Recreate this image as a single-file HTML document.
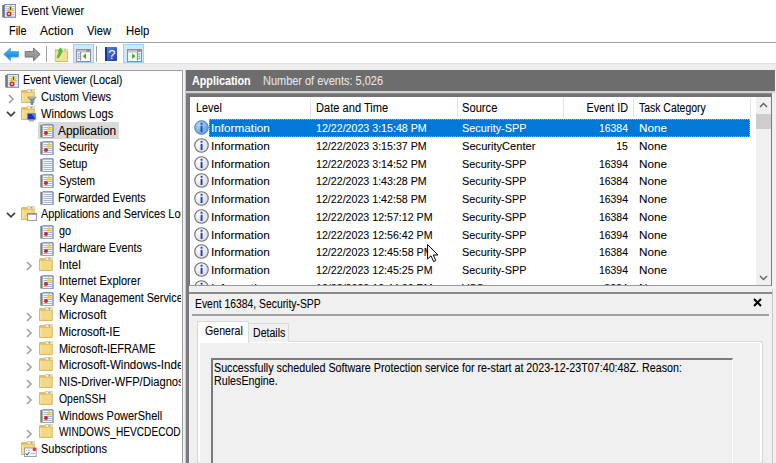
<!DOCTYPE html>
<html><head><meta charset="utf-8"><style>
html,body{margin:0;padding:0;}
body{width:776px;height:463px;overflow:hidden;position:relative;background:#fff;font-family:"Liberation Sans", sans-serif;}
.r{position:absolute;}
.t{position:absolute;white-space:nowrap;line-height:1;font-family:"Liberation Sans", sans-serif;-webkit-text-stroke:0.08px currentColor;}
svg{display:block;}
</style></head><body>
<div class="r" style="left:0px;top:0px;width:776px;height:22px;background:#fff;"></div><svg class="r" style="left:1.5px;top:3.6px" width="14" height="14" viewBox="0 0 14 14"><rect x="0.3" y="1" width="2.6" height="12.6" fill="#8c8c8c"/>
<path d="M0.3 2h2.6M0.3 4h2.6M0.3 6h2.6M0.3 8h2.6M0.3 10h2.6M0.3 12h2.6" stroke="#4a4a4a" stroke-width="0.8"/>
<rect x="2.4" y="0.5" width="11" height="13.2" fill="#eef3fa" stroke="#6f82b4" stroke-width="0.9"/>
<path d="M3.2 2.5h9.6M3.2 4.5h9.6M3.2 6.5h9.6M3.2 8.5h9.6M3.2 10.5h9.6M3.2 12.5h9.6" stroke="#b3c9ea" stroke-width="0.9"/>
<path d="M8.4 1.4 L11.4 7 L5.4 7 Z" fill="#f3d31a" stroke="#c9a600" stroke-width="0.5"/>
<rect x="8" y="2.9" width="0.9" height="3" fill="#3a3a1a"/>
<circle cx="7" cy="9.9" r="2.5" fill="#d42d2d"/>
<path d="M6.1 9l1.8 1.8M7.9 9l-1.8 1.8" stroke="#fff" stroke-width="0.8"/></svg><div class="t" style="left:21.00px;top:4.84px;font-size:12px;color:#000;transform:scaleX(0.8936);transform-origin:0 0;">Event Viewer</div><div class="t" style="left:8.50px;top:25.34px;font-size:12px;color:#000;transform:scaleX(0.9067);transform-origin:0 0;">File</div><div class="t" style="left:40.00px;top:25.34px;font-size:12px;color:#000;transform:scaleX(1.0000);transform-origin:0 0;">Action</div><div class="t" style="left:87.40px;top:25.34px;font-size:12px;color:#000;transform:scaleX(0.9341);transform-origin:0 0;">View</div><div class="t" style="left:126.00px;top:25.34px;font-size:12px;color:#000;transform:scaleX(0.9433);transform-origin:0 0;">Help</div><div class="r" style="left:0px;top:42px;width:776px;height:1px;background:#a0a0a0;"></div><div class="r" style="left:0px;top:43px;width:776px;height:20px;background:#fff;"></div><div class="r" style="left:0px;top:63px;width:776px;height:7px;background:#ededed;"></div><div class="r" style="left:0px;top:63px;width:776px;height:1px;background:#e3e3e3;"></div><svg class="r" style="left:3px;top:47px" width="17" height="15" viewBox="0 0 17 15">
<defs><linearGradient id="gb" x1="0" y1="0" x2="0" y2="1"><stop offset="0" stop-color="#5cb8f6"/><stop offset="0.6" stop-color="#1f8fe6"/><stop offset="1" stop-color="#3aa0ee"/></linearGradient></defs>
<path d="M0.8 7.3 L7.5 1 L7.5 4.5 L15.6 4.5 L15.6 10.1 L7.5 10.1 L7.5 13.8 Z" fill="url(#gb)" stroke="#4aa6ee" stroke-width="0.8" stroke-linejoin="round"/>
</svg><svg class="r" style="left:24px;top:47px" width="17" height="15" viewBox="0 0 17 15">
<defs><linearGradient id="gg" x1="0" y1="0" x2="0" y2="1"><stop offset="0" stop-color="#a8a8a8"/><stop offset="1" stop-color="#8a8a8a"/></linearGradient></defs>
<path d="M16.2 7.3 L9.5 1 L9.5 4.5 L1.2 4.5 L1.2 10.1 L9.5 10.1 L9.5 13.8 Z" fill="url(#gg)" stroke="#6e6e6e" stroke-width="0.9" stroke-linejoin="round"/>
</svg><div class="r" style="left:46px;top:46px;width:1px;height:16px;background:#a0a0a0;"></div><svg class="r" style="left:54px;top:46px" width="16" height="16" viewBox="0 0 16 16">
<rect x="1.2" y="3.8" width="12.5" height="11.8" fill="#f2d480" stroke="#d0a850" stroke-width="0.7"/>
<rect x="7.6" y="2.9" width="6.1" height="2.4" fill="#fbefd0" stroke="#d8b865" stroke-width="0.5"/>
<rect x="10.3" y="3.4" width="1.6" height="1" fill="#4c9be0"/>
<rect x="1.8" y="6.4" width="11.3" height="8.6" fill="#f8df98"/>
<path d="M6.4 1.3 L9.4 5.6 L3.6 5.6 Z" fill="#3cc83c"/>
<path d="M3 11.8 C3.4 9.2 4.8 7.2 5.2 5.4 L7.7 5.4 C7.4 7.8 5.9 9.9 4.4 12 Z" fill="#3cc83c" stroke="#2aa02a" stroke-width="0.4"/>
</svg><div class="r" style="left:73px;top:44px;width:21px;height:19px;background:#cce8ff;box-sizing:border-box;border:1px solid #99d1ff;"></div><svg class="r" style="left:76px;top:49px" width="15" height="13" viewBox="0 0 15 13">
<rect x="0.5" y="0.5" width="14" height="12" fill="#f6f6f6" stroke="#8f8f8f"/>
<rect x="1" y="1" width="13" height="2.4" fill="#c2c2c2"/>
<rect x="10.5" y="1.3" width="1.2" height="1.2" fill="#555"/><rect x="12.2" y="1.3" width="1.2" height="1.2" fill="#555"/>
<rect x="1" y="3" width="3.2" height="8.5" fill="#f2f2f2"/><path d="M1.8 5h1.8M1.8 7.2h1.8M1.8 9.4h1.8" stroke="#3a78d0" stroke-width="0.9"/><rect x="4.2" y="3" width="0.9" height="8.5" fill="#7a7a7a"/><path d="M10 4.3 L6.8 7.2 L10 10.1Z" fill="#28b028"/>
</svg><div class="r" style="left:96px;top:46px;width:1px;height:16px;background:#a0a0a0;"></div><svg class="r" style="left:105px;top:47px" width="12" height="14" viewBox="0 0 12 14">
<defs><linearGradient id="gh" x1="0" y1="0" x2="1" y2="1"><stop offset="0" stop-color="#5b86e0"/><stop offset="1" stop-color="#1f3fa8"/></linearGradient></defs>
<rect x="0" y="0" width="12" height="14" rx="1" fill="url(#gh)"/>
<rect x="0" y="0" width="2" height="14" fill="#1a3590"/>
<text x="6.9" y="12" font-family="Liberation Sans" font-size="13" fill="#fff" text-anchor="middle">?</text>
</svg><div class="r" style="left:123px;top:44px;width:21px;height:19px;background:#cce8ff;box-sizing:border-box;border:1px solid #99d1ff;"></div><svg class="r" style="left:127px;top:49px" width="15" height="13" viewBox="0 0 15 13">
<rect x="0.5" y="0.5" width="14" height="12" fill="#f6f6f6" stroke="#8f8f8f"/>
<rect x="1" y="1" width="13" height="2.4" fill="#c2c2c2"/>
<rect x="10.5" y="1.3" width="1.2" height="1.2" fill="#555"/><rect x="12.2" y="1.3" width="1.2" height="1.2" fill="#555"/>
<rect x="10.8" y="3" width="3.2" height="8.5" fill="#f2f2f2"/><path d="M11.4 5h1.8M11.4 7.2h1.8M11.4 9.4h1.8" stroke="#3a78d0" stroke-width="0.9"/><rect x="9.9" y="3" width="0.9" height="8.5" fill="#7a7a7a"/><path d="M5.2 4.3 L8.4 7.2 L5.2 10.1Z" fill="#28b028"/>
</svg><div class="r" style="left:0px;top:70px;width:183px;height:393px;background:#fff;box-sizing:border-box;border-top:1px solid #9ca1aa;border-right:1px solid #9ca1aa;"></div><div class="r" style="left:183px;top:70px;width:3px;height:393px;background:#f0f0f0;"></div><div class="r" style="left:37.6px;top:122.2px;width:81px;height:16.4px;background:#d9d9d9;"></div><div class="r" style="left:0;top:71px;width:181px;height:392px;overflow:hidden"><div class="t" style="left:23.2px;top:3.24px;font-size:12px;transform:scaleX(0.9);transform-origin:0 0">Event Viewer (Local)</div><div class="t" style="left:40.6px;top:20.01px;font-size:12px;transform:scaleX(0.915);transform-origin:0 0">Custom Views</div><div class="t" style="left:40.8px;top:36.78px;font-size:12px;transform:scaleX(0.925);transform-origin:0 0">Windows Logs</div><div class="t" style="left:58.2px;top:53.55px;font-size:12px;transform:scaleX(0.99);transform-origin:0 0">Application</div><div class="t" style="left:58.7px;top:70.32px;font-size:12px;transform:scaleX(0.91);transform-origin:0 0">Security</div><div class="t" style="left:58.7px;top:87.09px;font-size:12px;transform:scaleX(0.9);transform-origin:0 0">Setup</div><div class="t" style="left:58.7px;top:103.86px;font-size:12px;transform:scaleX(0.9);transform-origin:0 0">System</div><div class="t" style="left:58.4px;top:120.63px;font-size:12px;transform:scaleX(0.9);transform-origin:0 0">Forwarded Events</div><div class="t" style="left:40.8px;top:137.40px;font-size:12px;transform:scaleX(0.905);transform-origin:0 0">Applications and Services Logs</div><div class="t" style="left:58.7px;top:154.17px;font-size:12px;transform:scaleX(0.9);transform-origin:0 0">go</div><div class="t" style="left:58.7px;top:170.94px;font-size:12px;transform:scaleX(0.9);transform-origin:0 0">Hardware Events</div><div class="t" style="left:58.7px;top:187.71px;font-size:12px;transform:scaleX(0.96);transform-origin:0 0">Intel</div><div class="t" style="left:58.7px;top:204.48px;font-size:12px;transform:scaleX(0.92);transform-origin:0 0">Internet Explorer</div><div class="t" style="left:58.7px;top:221.25px;font-size:12px;transform:scaleX(0.9);transform-origin:0 0">Key Management Service</div><div class="t" style="left:58.7px;top:238.02px;font-size:12px;transform:scaleX(0.975);transform-origin:0 0">Microsoft</div><div class="t" style="left:58.7px;top:254.79px;font-size:12px;transform:scaleX(0.955);transform-origin:0 0">Microsoft-IE</div><div class="t" style="left:58.7px;top:271.56px;font-size:12px;transform:scaleX(0.91);transform-origin:0 0">Microsoft-IEFRAME</div><div class="t" style="left:58.7px;top:288.33px;font-size:12px;transform:scaleX(0.966);transform-origin:0 0">Microsoft-Windows-Indexing</div><div class="t" style="left:58.7px;top:305.10px;font-size:12px;transform:scaleX(0.93);transform-origin:0 0">NIS-Driver-WFP/Diagnostic</div><div class="t" style="left:58.7px;top:321.87px;font-size:12px;transform:scaleX(0.868);transform-origin:0 0">OpenSSH</div><div class="t" style="left:58.7px;top:338.64px;font-size:12px;transform:scaleX(0.915);transform-origin:0 0">Windows PowerShell</div><div class="t" style="left:58.7px;top:355.41px;font-size:12px;transform:scaleX(0.845);transform-origin:0 0">WINDOWS_HEVCDECODER</div><div class="t" style="left:40.6px;top:372.18px;font-size:12px;transform:scaleX(0.915);transform-origin:0 0">Subscriptions</div></div><svg class="r" style="left:4.5px;top:74.0px" width="14" height="14" viewBox="0 0 14 14"><rect x="0.3" y="1" width="2.6" height="12.6" fill="#8c8c8c"/>
<path d="M0.3 2h2.6M0.3 4h2.6M0.3 6h2.6M0.3 8h2.6M0.3 10h2.6M0.3 12h2.6" stroke="#4a4a4a" stroke-width="0.8"/>
<rect x="2.4" y="0.5" width="11" height="13.2" fill="#eef3fa" stroke="#6f82b4" stroke-width="0.9"/>
<path d="M3.2 2.5h9.6M3.2 4.5h9.6M3.2 6.5h9.6M3.2 8.5h9.6M3.2 10.5h9.6M3.2 12.5h9.6" stroke="#b3c9ea" stroke-width="0.9"/>
<path d="M8.4 1.4 L11.4 7 L5.4 7 Z" fill="#f3d31a" stroke="#c9a600" stroke-width="0.5"/>
<rect x="8" y="2.9" width="0.9" height="3" fill="#3a3a1a"/>
<circle cx="7" cy="9.9" r="2.5" fill="#d42d2d"/>
<path d="M6.1 9l1.8 1.8M7.9 9l-1.8 1.8" stroke="#fff" stroke-width="0.8"/></svg><svg class="r" style="left:21px;top:88.97px" width="16" height="16" viewBox="0 0 16 16"><path d="M0.6 1.6h5.2l1 1.2h6.2v10.6H0.6z" fill="#e8c468" stroke="#d2aa50" stroke-width="0.7"/>
<rect x="6.6" y="0.4" width="6.6" height="3.2" fill="#fbf1d2" stroke="#d8b865" stroke-width="0.6"/>
<rect x="9.4" y="1.2" width="2" height="1.2" fill="#4c9be0"/>
<path d="M0.6 3.2h12.6v10.2H0.6z" fill="#f5d883" stroke="#d6b158" stroke-width="0.7"/>
<rect x="1.3" y="3.9" width="1" height="9" fill="#fbe7a8"/>
<path d="M6.8 8.2h8.4l-3.2 3.6v3.6h-2v-3.6z" fill="#7d9ab8" stroke="#4a6482" stroke-width="0.6"/><path d="M8 8.8h6" stroke="#c8dcef" stroke-width="0.8"/></svg><svg class="r" style="left:6.8px;top:93.57000000000001px" width="8" height="10" viewBox="0 0 8 10"><path d="M2 1 L6 5 L2 9" fill="none" stroke="#a0a0a0" stroke-width="1.6"/></svg><svg class="r" style="left:21px;top:105.74px" width="16" height="16" viewBox="0 0 16 16"><path d="M0.6 1.6h5.2l1 1.2h6.2v10.6H0.6z" fill="#e8c468" stroke="#d2aa50" stroke-width="0.7"/>
<rect x="6.6" y="0.4" width="6.6" height="3.2" fill="#fbf1d2" stroke="#d8b865" stroke-width="0.6"/>
<rect x="9.4" y="1.2" width="2" height="1.2" fill="#4c9be0"/>
<path d="M0.6 3.2h12.6v10.2H0.6z" fill="#f5d883" stroke="#d6b158" stroke-width="0.7"/>
<rect x="1.3" y="3.9" width="1" height="9" fill="#fbe7a8"/>
<rect x="6.2" y="7.2" width="8.6" height="6.6" fill="#1b2fc0" stroke="#b0b0b0" stroke-width="0.8"/><path d="M10.5 7.8h3.8v5.4z" fill="#6a8cf0" opacity="0.8"/><rect x="8" y="14.2" width="5" height="1.2" fill="#9a9a9a"/></svg><svg class="r" style="left:5.8px;top:110.34px" width="10" height="8" viewBox="0 0 10 8"><path d="M1 1.8 L5 5.8 L9 1.8" fill="none" stroke="#404040" stroke-width="1.7"/></svg><svg class="r" style="left:39.6px;top:124.11000000000001px" width="14" height="14" viewBox="0 0 14 14">
<rect x="0.4" y="0.8" width="2.6" height="13" fill="#9a9a9a"/>
<path d="M0.4 2h2.6M0.4 4h2.6M0.4 6h2.6M0.4 8h2.6M0.4 10h2.6M0.4 12h2.6" stroke="#505050" stroke-width="0.8"/>
<rect x="2.6" y="0.6" width="10.6" height="13.1" fill="#f6f9fd"/>
<path d="M2.6 0.9h10.4v12.8" fill="none" stroke="#4a5fa8" stroke-width="1"/>
<path d="M2.6 13.5h10.6" stroke="#8a8a9a" stroke-width="0.8"/>
<path d="M3.4 3.5h9M3.4 5.5h9M3.4 7.5h9M3.4 9.5h9M3.4 11.5h9" stroke="#9dbbe6" stroke-width="1"/>
<path d="M9.15 1.5 L11.5 6.2 L6.8 6.2 Z" fill="#f2d423" stroke="#e6c21a" stroke-width="0.4"/><circle cx="6" cy="8.9" r="2" fill="#cc2a2a"/>
</svg><svg class="r" style="left:39.6px;top:140.88000000000002px" width="14" height="14" viewBox="0 0 14 14">
<rect x="0.4" y="0.8" width="2.6" height="13" fill="#9a9a9a"/>
<path d="M0.4 2h2.6M0.4 4h2.6M0.4 6h2.6M0.4 8h2.6M0.4 10h2.6M0.4 12h2.6" stroke="#505050" stroke-width="0.8"/>
<rect x="2.6" y="0.6" width="10.6" height="13.1" fill="#f6f9fd"/>
<path d="M2.6 0.9h10.4v12.8" fill="none" stroke="#4a5fa8" stroke-width="1"/>
<path d="M2.6 13.5h10.6" stroke="#8a8a9a" stroke-width="0.8"/>
<path d="M3.4 3.5h9M3.4 5.5h9M3.4 7.5h9M3.4 9.5h9M3.4 11.5h9" stroke="#9dbbe6" stroke-width="1"/>
<path d="M9.15 1.5 L11.5 6.2 L6.8 6.2 Z" fill="#f2d423" stroke="#e6c21a" stroke-width="0.4"/><circle cx="6" cy="8.9" r="2" fill="#cc2a2a"/>
</svg><svg class="r" style="left:39.6px;top:157.65px" width="14" height="14" viewBox="0 0 14 14">
<rect x="0.4" y="0.8" width="2.6" height="13" fill="#9a9a9a"/>
<path d="M0.4 2h2.6M0.4 4h2.6M0.4 6h2.6M0.4 8h2.6M0.4 10h2.6M0.4 12h2.6" stroke="#505050" stroke-width="0.8"/>
<rect x="2.6" y="0.6" width="10.6" height="13.1" fill="#f6f9fd"/>
<path d="M2.6 0.9h10.4v12.8" fill="none" stroke="#4a5fa8" stroke-width="1"/>
<path d="M2.6 13.5h10.6" stroke="#8a8a9a" stroke-width="0.8"/>
<path d="M3.4 3.5h9M3.4 5.5h9M3.4 7.5h9M3.4 9.5h9M3.4 11.5h9" stroke="#9dbbe6" stroke-width="1"/>

</svg><svg class="r" style="left:39.6px;top:174.42000000000002px" width="14" height="14" viewBox="0 0 14 14">
<rect x="0.4" y="0.8" width="2.6" height="13" fill="#9a9a9a"/>
<path d="M0.4 2h2.6M0.4 4h2.6M0.4 6h2.6M0.4 8h2.6M0.4 10h2.6M0.4 12h2.6" stroke="#505050" stroke-width="0.8"/>
<rect x="2.6" y="0.6" width="10.6" height="13.1" fill="#f6f9fd"/>
<path d="M2.6 0.9h10.4v12.8" fill="none" stroke="#4a5fa8" stroke-width="1"/>
<path d="M2.6 13.5h10.6" stroke="#8a8a9a" stroke-width="0.8"/>
<path d="M3.4 3.5h9M3.4 5.5h9M3.4 7.5h9M3.4 9.5h9M3.4 11.5h9" stroke="#9dbbe6" stroke-width="1"/>
<path d="M9.15 1.5 L11.5 6.2 L6.8 6.2 Z" fill="#f2d423" stroke="#e6c21a" stroke-width="0.4"/><circle cx="6" cy="8.9" r="2" fill="#cc2a2a"/>
</svg><svg class="r" style="left:39.6px;top:191.19000000000003px" width="14" height="14" viewBox="0 0 14 14">
<rect x="0.4" y="0.8" width="2.6" height="13" fill="#9a9a9a"/>
<path d="M0.4 2h2.6M0.4 4h2.6M0.4 6h2.6M0.4 8h2.6M0.4 10h2.6M0.4 12h2.6" stroke="#505050" stroke-width="0.8"/>
<rect x="2.6" y="0.6" width="10.6" height="13.1" fill="#f6f9fd"/>
<path d="M2.6 0.9h10.4v12.8" fill="none" stroke="#4a5fa8" stroke-width="1"/>
<path d="M2.6 13.5h10.6" stroke="#8a8a9a" stroke-width="0.8"/>
<path d="M3.4 3.5h9M3.4 5.5h9M3.4 7.5h9M3.4 9.5h9M3.4 11.5h9" stroke="#9dbbe6" stroke-width="1"/>

</svg><svg class="r" style="left:21px;top:206.36px" width="16" height="16" viewBox="0 0 16 16"><path d="M0.6 1.6h5.2l1 1.2h6.2v10.6H0.6z" fill="#e8c468" stroke="#d2aa50" stroke-width="0.7"/>
<rect x="6.6" y="0.4" width="6.6" height="3.2" fill="#fbf1d2" stroke="#d8b865" stroke-width="0.6"/>
<rect x="9.4" y="1.2" width="2" height="1.2" fill="#4c9be0"/>
<path d="M0.6 3.2h12.6v10.2H0.6z" fill="#f5d883" stroke="#d6b158" stroke-width="0.7"/>
<rect x="1.3" y="3.9" width="1" height="9" fill="#fbe7a8"/>
<rect x="6.4" y="7.6" width="9" height="6.8" fill="#fbfbfb" stroke="#868c9a" stroke-width="0.9"/><rect x="6.4" y="7.4" width="9" height="1.3" fill="#868c9a"/></svg><svg class="r" style="left:5.8px;top:210.96px" width="10" height="8" viewBox="0 0 10 8"><path d="M1 1.8 L5 5.8 L9 1.8" fill="none" stroke="#404040" stroke-width="1.7"/></svg><svg class="r" style="left:39.6px;top:224.73000000000002px" width="14" height="14" viewBox="0 0 14 14">
<rect x="0.4" y="0.8" width="2.6" height="13" fill="#9a9a9a"/>
<path d="M0.4 2h2.6M0.4 4h2.6M0.4 6h2.6M0.4 8h2.6M0.4 10h2.6M0.4 12h2.6" stroke="#505050" stroke-width="0.8"/>
<rect x="2.6" y="0.6" width="10.6" height="13.1" fill="#f6f9fd"/>
<path d="M2.6 0.9h10.4v12.8" fill="none" stroke="#4a5fa8" stroke-width="1"/>
<path d="M2.6 13.5h10.6" stroke="#8a8a9a" stroke-width="0.8"/>
<path d="M3.4 3.5h9M3.4 5.5h9M3.4 7.5h9M3.4 9.5h9M3.4 11.5h9" stroke="#9dbbe6" stroke-width="1"/>
<path d="M9.15 1.5 L11.5 6.2 L6.8 6.2 Z" fill="#f2d423" stroke="#e6c21a" stroke-width="0.4"/><circle cx="6" cy="8.9" r="2" fill="#cc2a2a"/>
</svg><svg class="r" style="left:39.6px;top:241.5px" width="14" height="14" viewBox="0 0 14 14">
<rect x="0.4" y="0.8" width="2.6" height="13" fill="#9a9a9a"/>
<path d="M0.4 2h2.6M0.4 4h2.6M0.4 6h2.6M0.4 8h2.6M0.4 10h2.6M0.4 12h2.6" stroke="#505050" stroke-width="0.8"/>
<rect x="2.6" y="0.6" width="10.6" height="13.1" fill="#f6f9fd"/>
<path d="M2.6 0.9h10.4v12.8" fill="none" stroke="#4a5fa8" stroke-width="1"/>
<path d="M2.6 13.5h10.6" stroke="#8a8a9a" stroke-width="0.8"/>
<path d="M3.4 3.5h9M3.4 5.5h9M3.4 7.5h9M3.4 9.5h9M3.4 11.5h9" stroke="#9dbbe6" stroke-width="1"/>
<path d="M9.15 1.5 L11.5 6.2 L6.8 6.2 Z" fill="#f2d423" stroke="#e6c21a" stroke-width="0.4"/><circle cx="6" cy="8.9" r="2" fill="#cc2a2a"/>
</svg><svg class="r" style="left:38.8px;top:256.67px" width="16" height="16" viewBox="0 0 16 16"><path d="M0.6 1.6h5.2l1 1.2h6.2v10.6H0.6z" fill="#e8c468" stroke="#d2aa50" stroke-width="0.7"/>
<rect x="6.6" y="0.4" width="6.6" height="3.2" fill="#fbf1d2" stroke="#d8b865" stroke-width="0.6"/>
<rect x="9.4" y="1.2" width="2" height="1.2" fill="#4c9be0"/>
<path d="M0.6 3.2h12.6v10.2H0.6z" fill="#f5d883" stroke="#d6b158" stroke-width="0.7"/>
<rect x="1.3" y="3.9" width="1" height="9" fill="#fbe7a8"/>
</svg><svg class="r" style="left:24.8px;top:261.27px" width="8" height="10" viewBox="0 0 8 10"><path d="M2 1 L6 5 L2 9" fill="none" stroke="#a0a0a0" stroke-width="1.6"/></svg><svg class="r" style="left:39.6px;top:275.03999999999996px" width="14" height="14" viewBox="0 0 14 14">
<rect x="0.4" y="0.8" width="2.6" height="13" fill="#9a9a9a"/>
<path d="M0.4 2h2.6M0.4 4h2.6M0.4 6h2.6M0.4 8h2.6M0.4 10h2.6M0.4 12h2.6" stroke="#505050" stroke-width="0.8"/>
<rect x="2.6" y="0.6" width="10.6" height="13.1" fill="#f6f9fd"/>
<path d="M2.6 0.9h10.4v12.8" fill="none" stroke="#4a5fa8" stroke-width="1"/>
<path d="M2.6 13.5h10.6" stroke="#8a8a9a" stroke-width="0.8"/>
<path d="M3.4 3.5h9M3.4 5.5h9M3.4 7.5h9M3.4 9.5h9M3.4 11.5h9" stroke="#9dbbe6" stroke-width="1"/>
<path d="M9.15 1.5 L11.5 6.2 L6.8 6.2 Z" fill="#f2d423" stroke="#e6c21a" stroke-width="0.4"/><circle cx="6" cy="8.9" r="2" fill="#cc2a2a"/>
</svg><svg class="r" style="left:39.6px;top:291.80999999999995px" width="14" height="14" viewBox="0 0 14 14">
<rect x="0.4" y="0.8" width="2.6" height="13" fill="#9a9a9a"/>
<path d="M0.4 2h2.6M0.4 4h2.6M0.4 6h2.6M0.4 8h2.6M0.4 10h2.6M0.4 12h2.6" stroke="#505050" stroke-width="0.8"/>
<rect x="2.6" y="0.6" width="10.6" height="13.1" fill="#f6f9fd"/>
<path d="M2.6 0.9h10.4v12.8" fill="none" stroke="#4a5fa8" stroke-width="1"/>
<path d="M2.6 13.5h10.6" stroke="#8a8a9a" stroke-width="0.8"/>
<path d="M3.4 3.5h9M3.4 5.5h9M3.4 7.5h9M3.4 9.5h9M3.4 11.5h9" stroke="#9dbbe6" stroke-width="1"/>
<path d="M9.15 1.5 L11.5 6.2 L6.8 6.2 Z" fill="#f2d423" stroke="#e6c21a" stroke-width="0.4"/><circle cx="6" cy="8.9" r="2" fill="#cc2a2a"/>
</svg><svg class="r" style="left:38.8px;top:306.98px" width="16" height="16" viewBox="0 0 16 16"><path d="M0.6 1.6h5.2l1 1.2h6.2v10.6H0.6z" fill="#e8c468" stroke="#d2aa50" stroke-width="0.7"/>
<rect x="6.6" y="0.4" width="6.6" height="3.2" fill="#fbf1d2" stroke="#d8b865" stroke-width="0.6"/>
<rect x="9.4" y="1.2" width="2" height="1.2" fill="#4c9be0"/>
<path d="M0.6 3.2h12.6v10.2H0.6z" fill="#f5d883" stroke="#d6b158" stroke-width="0.7"/>
<rect x="1.3" y="3.9" width="1" height="9" fill="#fbe7a8"/>
</svg><svg class="r" style="left:24.8px;top:311.58px" width="8" height="10" viewBox="0 0 8 10"><path d="M2 1 L6 5 L2 9" fill="none" stroke="#a0a0a0" stroke-width="1.6"/></svg><svg class="r" style="left:38.8px;top:323.75px" width="16" height="16" viewBox="0 0 16 16"><path d="M0.6 1.6h5.2l1 1.2h6.2v10.6H0.6z" fill="#e8c468" stroke="#d2aa50" stroke-width="0.7"/>
<rect x="6.6" y="0.4" width="6.6" height="3.2" fill="#fbf1d2" stroke="#d8b865" stroke-width="0.6"/>
<rect x="9.4" y="1.2" width="2" height="1.2" fill="#4c9be0"/>
<path d="M0.6 3.2h12.6v10.2H0.6z" fill="#f5d883" stroke="#d6b158" stroke-width="0.7"/>
<rect x="1.3" y="3.9" width="1" height="9" fill="#fbe7a8"/>
</svg><svg class="r" style="left:24.8px;top:328.34999999999997px" width="8" height="10" viewBox="0 0 8 10"><path d="M2 1 L6 5 L2 9" fill="none" stroke="#a0a0a0" stroke-width="1.6"/></svg><svg class="r" style="left:38.8px;top:340.52000000000004px" width="16" height="16" viewBox="0 0 16 16"><path d="M0.6 1.6h5.2l1 1.2h6.2v10.6H0.6z" fill="#e8c468" stroke="#d2aa50" stroke-width="0.7"/>
<rect x="6.6" y="0.4" width="6.6" height="3.2" fill="#fbf1d2" stroke="#d8b865" stroke-width="0.6"/>
<rect x="9.4" y="1.2" width="2" height="1.2" fill="#4c9be0"/>
<path d="M0.6 3.2h12.6v10.2H0.6z" fill="#f5d883" stroke="#d6b158" stroke-width="0.7"/>
<rect x="1.3" y="3.9" width="1" height="9" fill="#fbe7a8"/>
</svg><svg class="r" style="left:24.8px;top:345.12px" width="8" height="10" viewBox="0 0 8 10"><path d="M2 1 L6 5 L2 9" fill="none" stroke="#a0a0a0" stroke-width="1.6"/></svg><svg class="r" style="left:38.8px;top:357.29px" width="16" height="16" viewBox="0 0 16 16"><path d="M0.6 1.6h5.2l1 1.2h6.2v10.6H0.6z" fill="#e8c468" stroke="#d2aa50" stroke-width="0.7"/>
<rect x="6.6" y="0.4" width="6.6" height="3.2" fill="#fbf1d2" stroke="#d8b865" stroke-width="0.6"/>
<rect x="9.4" y="1.2" width="2" height="1.2" fill="#4c9be0"/>
<path d="M0.6 3.2h12.6v10.2H0.6z" fill="#f5d883" stroke="#d6b158" stroke-width="0.7"/>
<rect x="1.3" y="3.9" width="1" height="9" fill="#fbe7a8"/>
</svg><svg class="r" style="left:24.8px;top:361.89px" width="8" height="10" viewBox="0 0 8 10"><path d="M2 1 L6 5 L2 9" fill="none" stroke="#a0a0a0" stroke-width="1.6"/></svg><svg class="r" style="left:38.8px;top:374.06px" width="16" height="16" viewBox="0 0 16 16"><path d="M0.6 1.6h5.2l1 1.2h6.2v10.6H0.6z" fill="#e8c468" stroke="#d2aa50" stroke-width="0.7"/>
<rect x="6.6" y="0.4" width="6.6" height="3.2" fill="#fbf1d2" stroke="#d8b865" stroke-width="0.6"/>
<rect x="9.4" y="1.2" width="2" height="1.2" fill="#4c9be0"/>
<path d="M0.6 3.2h12.6v10.2H0.6z" fill="#f5d883" stroke="#d6b158" stroke-width="0.7"/>
<rect x="1.3" y="3.9" width="1" height="9" fill="#fbe7a8"/>
</svg><svg class="r" style="left:24.8px;top:378.65999999999997px" width="8" height="10" viewBox="0 0 8 10"><path d="M2 1 L6 5 L2 9" fill="none" stroke="#a0a0a0" stroke-width="1.6"/></svg><svg class="r" style="left:38.8px;top:390.83px" width="16" height="16" viewBox="0 0 16 16"><path d="M0.6 1.6h5.2l1 1.2h6.2v10.6H0.6z" fill="#e8c468" stroke="#d2aa50" stroke-width="0.7"/>
<rect x="6.6" y="0.4" width="6.6" height="3.2" fill="#fbf1d2" stroke="#d8b865" stroke-width="0.6"/>
<rect x="9.4" y="1.2" width="2" height="1.2" fill="#4c9be0"/>
<path d="M0.6 3.2h12.6v10.2H0.6z" fill="#f5d883" stroke="#d6b158" stroke-width="0.7"/>
<rect x="1.3" y="3.9" width="1" height="9" fill="#fbe7a8"/>
</svg><svg class="r" style="left:24.8px;top:395.42999999999995px" width="8" height="10" viewBox="0 0 8 10"><path d="M2 1 L6 5 L2 9" fill="none" stroke="#a0a0a0" stroke-width="1.6"/></svg><svg class="r" style="left:39.6px;top:409.19999999999993px" width="14" height="14" viewBox="0 0 14 14">
<rect x="0.4" y="0.8" width="2.6" height="13" fill="#9a9a9a"/>
<path d="M0.4 2h2.6M0.4 4h2.6M0.4 6h2.6M0.4 8h2.6M0.4 10h2.6M0.4 12h2.6" stroke="#505050" stroke-width="0.8"/>
<rect x="2.6" y="0.6" width="10.6" height="13.1" fill="#f6f9fd"/>
<path d="M2.6 0.9h10.4v12.8" fill="none" stroke="#4a5fa8" stroke-width="1"/>
<path d="M2.6 13.5h10.6" stroke="#8a8a9a" stroke-width="0.8"/>
<path d="M3.4 3.5h9M3.4 5.5h9M3.4 7.5h9M3.4 9.5h9M3.4 11.5h9" stroke="#9dbbe6" stroke-width="1"/>
<path d="M9.15 1.5 L11.5 6.2 L6.8 6.2 Z" fill="#f2d423" stroke="#e6c21a" stroke-width="0.4"/><circle cx="6" cy="8.9" r="2" fill="#cc2a2a"/>
</svg><svg class="r" style="left:38.8px;top:424.37000000000006px" width="16" height="16" viewBox="0 0 16 16"><path d="M0.6 1.6h5.2l1 1.2h6.2v10.6H0.6z" fill="#e8c468" stroke="#d2aa50" stroke-width="0.7"/>
<rect x="6.6" y="0.4" width="6.6" height="3.2" fill="#fbf1d2" stroke="#d8b865" stroke-width="0.6"/>
<rect x="9.4" y="1.2" width="2" height="1.2" fill="#4c9be0"/>
<path d="M0.6 3.2h12.6v10.2H0.6z" fill="#f5d883" stroke="#d6b158" stroke-width="0.7"/>
<rect x="1.3" y="3.9" width="1" height="9" fill="#fbe7a8"/>
</svg><svg class="r" style="left:24.8px;top:428.97px" width="8" height="10" viewBox="0 0 8 10"><path d="M2 1 L6 5 L2 9" fill="none" stroke="#a0a0a0" stroke-width="1.6"/></svg><svg class="r" style="left:21px;top:441.14000000000004px" width="16" height="16" viewBox="0 0 16 16"><path d="M0.6 1.6h5.2l1 1.2h6.2v10.6H0.6z" fill="#e8c468" stroke="#d2aa50" stroke-width="0.7"/>
<rect x="6.6" y="0.4" width="6.6" height="3.2" fill="#fbf1d2" stroke="#d8b865" stroke-width="0.6"/>
<rect x="9.4" y="1.2" width="2" height="1.2" fill="#4c9be0"/>
<path d="M0.6 3.2h12.6v10.2H0.6z" fill="#f5d883" stroke="#d6b158" stroke-width="0.7"/>
<rect x="1.3" y="3.9" width="1" height="9" fill="#fbe7a8"/>
<rect x="3.4" y="7" width="11.8" height="8.6" fill="#fff" stroke="#8a8a8a" stroke-width="0.8"/><path d="M4.6 12.4l1.4 1.6 2.4-3" stroke="#1e6fd0" stroke-width="1.1" fill="none"/><path d="M5 9.2h1M7 9.2h1.8M9.6 12.6h4.4" stroke="#7aa0d0" stroke-width="0.8"/><circle cx="13.4" cy="8.4" r="1.8" fill="#e83a3a"/></svg><div class="r" style="left:186px;top:70px;width:590px;height:393px;background:#f0f0f0;"></div><div class="r" style="left:185px;top:70px;width:1px;height:393px;background:#c8c8c8;"></div><div class="r" style="left:186px;top:70.4px;width:589px;height:20.3px;background:#6d6d6d;"></div><div class="t" style="left:191.60px;top:74.54px;font-size:12px;color:#fff;transform:scaleX(0.8970);transform-origin:0 0;font-weight:bold;">Application</div><div class="t" style="left:263.40px;top:74.54px;font-size:12px;color:#e6e6e6;transform:scaleX(0.9130);transform-origin:0 0;">Number of events: 5,026</div><div class="r" style="left:186px;top:90.5px;width:589px;height:2.5px;background:#d0d0d0;"></div><div class="r" style="left:186px;top:93px;width:586px;height:193px;background:#fff;box-sizing:border-box;border-top:1px solid #8a8a8a;border-left:1px solid #8a8a8a;"></div><div class="r" style="left:187px;top:94px;width:585px;height:192px;background:#fff;box-sizing:border-box;border:3px solid #727272;border-right:2px solid #7a7a7a;border-bottom:1.5px solid #9a9a9a;"></div><div class="r" style="left:309.5px;top:98px;width:1px;height:20px;background:#e5e5e5;"></div><div class="r" style="left:456.5px;top:98px;width:1px;height:20px;background:#e5e5e5;"></div><div class="r" style="left:563px;top:98px;width:1px;height:20px;background:#e5e5e5;"></div><div class="r" style="left:633px;top:98px;width:1px;height:20px;background:#e5e5e5;"></div><div class="r" style="left:750px;top:98px;width:1px;height:20px;background:#e5e5e5;"></div><div class="t" style="left:196.40px;top:101.84px;font-size:12px;color:#000;transform:scaleX(0.9000);transform-origin:0 0;">Level</div><div class="t" style="left:316.40px;top:101.84px;font-size:12px;color:#000;transform:scaleX(0.9250);transform-origin:0 0;">Date and Time</div><div class="t" style="left:461.80px;top:101.84px;font-size:12px;color:#000;transform:scaleX(0.9300);transform-origin:0 0;">Source</div><div class="t" style="right:148px;top:101.84px;font-size:12px;transform:scaleX(0.9);transform-origin:100% 0">Event ID</div><div class="t" style="left:639.40px;top:101.84px;font-size:12px;color:#000;transform:scaleX(0.8700);transform-origin:0 0;">Task Category</div><div class="r" style="left:189px;top:97px;width:567px;height:188px;overflow:hidden"><div class="r" style="left:20px;top:22.299999999999997px;width:541px;height:17.5px;background:#0078d7;box-sizing:border-box;border:1px dotted #f39a4a"></div><svg class="r" style="left:5px;top:23.20px" width="15" height="15" viewBox="0 0 15 15">
<defs><radialGradient id="gs0" cx="0.35" cy="0.3" r="0.8"><stop offset="0" stop-color="#b5d6f3"/><stop offset="1" stop-color="#5a9ad8"/></radialGradient></defs>
<circle cx="7.5" cy="7.5" r="6.8" fill="url(#gs0)" stroke="#3f7cc0" stroke-width="1"/>
<rect x="6.6" y="2.8" width="1.9" height="1.9" fill="#1550c0"/><rect x="6.6" y="5.8" width="1.9" height="6.2" fill="#1550c0"/>
</svg><div class="t" style="left:21.70000000000001px;top:26.07px;font-size:11.5px;color:#fff;transform:scaleX(1.0226);transform-origin:0 0">Information</div><div class="t" style="left:126.79999999999998px;top:26.07px;font-size:11.5px;color:#fff;transform:scaleX(0.9256);transform-origin:0 0">12/22/2023 3:15:48 PM</div><div class="t" style="left:273.0px;top:26.07px;font-size:11.5px;color:#fff;transform:scaleX(0.9412);transform-origin:0 0">Security-SPP</div><div class="t" style="right:128.20000000000005px;top:26.07px;font-size:11.5px;color:#fff;transform:scaleX(0.9078);transform-origin:100% 0">16384</div><div class="t" style="left:449.79999999999995px;top:26.07px;font-size:11.5px;color:#fff;transform:scaleX(1.0174);transform-origin:0 0">None</div><svg class="r" style="left:5px;top:40.95px" width="15" height="15" viewBox="0 0 15 15">
<defs><radialGradient id="gs1" cx="0.35" cy="0.3" r="0.8"><stop offset="0" stop-color="#ffffff"/><stop offset="1" stop-color="#d8d8d8"/></radialGradient></defs>
<circle cx="7.5" cy="7.5" r="6.75" fill="url(#gs1)" stroke="#707070" stroke-width="1.1"/>
<rect x="6.6" y="2.8" width="1.9" height="1.9" fill="#1a3fc0"/><rect x="6.6" y="5.8" width="1.9" height="6.2" fill="#1a3fc0"/>
</svg><div class="t" style="left:21.70000000000001px;top:43.82px;font-size:11.5px;color:#000;transform:scaleX(1.0226);transform-origin:0 0">Information</div><div class="t" style="left:126.79999999999998px;top:43.82px;font-size:11.5px;color:#000;transform:scaleX(0.9256);transform-origin:0 0">12/22/2023 3:15:37 PM</div><div class="t" style="left:273.0px;top:43.82px;font-size:11.5px;color:#000;transform:scaleX(0.9652);transform-origin:0 0">SecurityCenter</div><div class="t" style="right:128.20000000000005px;top:43.82px;font-size:11.5px;color:#000;transform:scaleX(0.9078);transform-origin:100% 0">15</div><div class="t" style="left:449.79999999999995px;top:43.82px;font-size:11.5px;color:#000;transform:scaleX(1.0174);transform-origin:0 0">None</div><svg class="r" style="left:5px;top:58.70px" width="15" height="15" viewBox="0 0 15 15">
<defs><radialGradient id="gs2" cx="0.35" cy="0.3" r="0.8"><stop offset="0" stop-color="#ffffff"/><stop offset="1" stop-color="#d8d8d8"/></radialGradient></defs>
<circle cx="7.5" cy="7.5" r="6.75" fill="url(#gs2)" stroke="#707070" stroke-width="1.1"/>
<rect x="6.6" y="2.8" width="1.9" height="1.9" fill="#1a3fc0"/><rect x="6.6" y="5.8" width="1.9" height="6.2" fill="#1a3fc0"/>
</svg><div class="t" style="left:21.70000000000001px;top:61.57px;font-size:11.5px;color:#000;transform:scaleX(1.0226);transform-origin:0 0">Information</div><div class="t" style="left:126.79999999999998px;top:61.57px;font-size:11.5px;color:#000;transform:scaleX(0.9256);transform-origin:0 0">12/22/2023 3:14:52 PM</div><div class="t" style="left:273.0px;top:61.57px;font-size:11.5px;color:#000;transform:scaleX(0.9412);transform-origin:0 0">Security-SPP</div><div class="t" style="right:128.20000000000005px;top:61.57px;font-size:11.5px;color:#000;transform:scaleX(0.9078);transform-origin:100% 0">16394</div><div class="t" style="left:449.79999999999995px;top:61.57px;font-size:11.5px;color:#000;transform:scaleX(1.0174);transform-origin:0 0">None</div><svg class="r" style="left:5px;top:76.45px" width="15" height="15" viewBox="0 0 15 15">
<defs><radialGradient id="gs3" cx="0.35" cy="0.3" r="0.8"><stop offset="0" stop-color="#ffffff"/><stop offset="1" stop-color="#d8d8d8"/></radialGradient></defs>
<circle cx="7.5" cy="7.5" r="6.75" fill="url(#gs3)" stroke="#707070" stroke-width="1.1"/>
<rect x="6.6" y="2.8" width="1.9" height="1.9" fill="#1a3fc0"/><rect x="6.6" y="5.8" width="1.9" height="6.2" fill="#1a3fc0"/>
</svg><div class="t" style="left:21.70000000000001px;top:79.32px;font-size:11.5px;color:#000;transform:scaleX(1.0226);transform-origin:0 0">Information</div><div class="t" style="left:126.79999999999998px;top:79.32px;font-size:11.5px;color:#000;transform:scaleX(0.9256);transform-origin:0 0">12/22/2023 1:43:28 PM</div><div class="t" style="left:273.0px;top:79.32px;font-size:11.5px;color:#000;transform:scaleX(0.9412);transform-origin:0 0">Security-SPP</div><div class="t" style="right:128.20000000000005px;top:79.32px;font-size:11.5px;color:#000;transform:scaleX(0.9078);transform-origin:100% 0">16384</div><div class="t" style="left:449.79999999999995px;top:79.32px;font-size:11.5px;color:#000;transform:scaleX(1.0174);transform-origin:0 0">None</div><svg class="r" style="left:5px;top:94.20px" width="15" height="15" viewBox="0 0 15 15">
<defs><radialGradient id="gs4" cx="0.35" cy="0.3" r="0.8"><stop offset="0" stop-color="#ffffff"/><stop offset="1" stop-color="#d8d8d8"/></radialGradient></defs>
<circle cx="7.5" cy="7.5" r="6.75" fill="url(#gs4)" stroke="#707070" stroke-width="1.1"/>
<rect x="6.6" y="2.8" width="1.9" height="1.9" fill="#1a3fc0"/><rect x="6.6" y="5.8" width="1.9" height="6.2" fill="#1a3fc0"/>
</svg><div class="t" style="left:21.70000000000001px;top:97.07px;font-size:11.5px;color:#000;transform:scaleX(1.0226);transform-origin:0 0">Information</div><div class="t" style="left:126.79999999999998px;top:97.07px;font-size:11.5px;color:#000;transform:scaleX(0.9256);transform-origin:0 0">12/22/2023 1:42:58 PM</div><div class="t" style="left:273.0px;top:97.07px;font-size:11.5px;color:#000;transform:scaleX(0.9412);transform-origin:0 0">Security-SPP</div><div class="t" style="right:128.20000000000005px;top:97.07px;font-size:11.5px;color:#000;transform:scaleX(0.9078);transform-origin:100% 0">16394</div><div class="t" style="left:449.79999999999995px;top:97.07px;font-size:11.5px;color:#000;transform:scaleX(1.0174);transform-origin:0 0">None</div><svg class="r" style="left:5px;top:111.95px" width="15" height="15" viewBox="0 0 15 15">
<defs><radialGradient id="gs5" cx="0.35" cy="0.3" r="0.8"><stop offset="0" stop-color="#ffffff"/><stop offset="1" stop-color="#d8d8d8"/></radialGradient></defs>
<circle cx="7.5" cy="7.5" r="6.75" fill="url(#gs5)" stroke="#707070" stroke-width="1.1"/>
<rect x="6.6" y="2.8" width="1.9" height="1.9" fill="#1a3fc0"/><rect x="6.6" y="5.8" width="1.9" height="6.2" fill="#1a3fc0"/>
</svg><div class="t" style="left:21.70000000000001px;top:114.82px;font-size:11.5px;color:#000;transform:scaleX(1.0226);transform-origin:0 0">Information</div><div class="t" style="left:126.79999999999998px;top:114.82px;font-size:11.5px;color:#000;transform:scaleX(0.9256);transform-origin:0 0">12/22/2023 12:57:12 PM</div><div class="t" style="left:273.0px;top:114.82px;font-size:11.5px;color:#000;transform:scaleX(0.9412);transform-origin:0 0">Security-SPP</div><div class="t" style="right:128.20000000000005px;top:114.82px;font-size:11.5px;color:#000;transform:scaleX(0.9078);transform-origin:100% 0">16384</div><div class="t" style="left:449.79999999999995px;top:114.82px;font-size:11.5px;color:#000;transform:scaleX(1.0174);transform-origin:0 0">None</div><svg class="r" style="left:5px;top:129.70px" width="15" height="15" viewBox="0 0 15 15">
<defs><radialGradient id="gs6" cx="0.35" cy="0.3" r="0.8"><stop offset="0" stop-color="#ffffff"/><stop offset="1" stop-color="#d8d8d8"/></radialGradient></defs>
<circle cx="7.5" cy="7.5" r="6.75" fill="url(#gs6)" stroke="#707070" stroke-width="1.1"/>
<rect x="6.6" y="2.8" width="1.9" height="1.9" fill="#1a3fc0"/><rect x="6.6" y="5.8" width="1.9" height="6.2" fill="#1a3fc0"/>
</svg><div class="t" style="left:21.70000000000001px;top:132.57px;font-size:11.5px;color:#000;transform:scaleX(1.0226);transform-origin:0 0">Information</div><div class="t" style="left:126.79999999999998px;top:132.57px;font-size:11.5px;color:#000;transform:scaleX(0.9256);transform-origin:0 0">12/22/2023 12:56:42 PM</div><div class="t" style="left:273.0px;top:132.57px;font-size:11.5px;color:#000;transform:scaleX(0.9412);transform-origin:0 0">Security-SPP</div><div class="t" style="right:128.20000000000005px;top:132.57px;font-size:11.5px;color:#000;transform:scaleX(0.9078);transform-origin:100% 0">16394</div><div class="t" style="left:449.79999999999995px;top:132.57px;font-size:11.5px;color:#000;transform:scaleX(1.0174);transform-origin:0 0">None</div><svg class="r" style="left:5px;top:147.45px" width="15" height="15" viewBox="0 0 15 15">
<defs><radialGradient id="gs7" cx="0.35" cy="0.3" r="0.8"><stop offset="0" stop-color="#ffffff"/><stop offset="1" stop-color="#d8d8d8"/></radialGradient></defs>
<circle cx="7.5" cy="7.5" r="6.75" fill="url(#gs7)" stroke="#707070" stroke-width="1.1"/>
<rect x="6.6" y="2.8" width="1.9" height="1.9" fill="#1a3fc0"/><rect x="6.6" y="5.8" width="1.9" height="6.2" fill="#1a3fc0"/>
</svg><div class="t" style="left:21.70000000000001px;top:150.32px;font-size:11.5px;color:#000;transform:scaleX(1.0226);transform-origin:0 0">Information</div><div class="t" style="left:126.79999999999998px;top:150.32px;font-size:11.5px;color:#000;transform:scaleX(0.9256);transform-origin:0 0">12/22/2023 12:45:58 PM</div><div class="t" style="left:273.0px;top:150.32px;font-size:11.5px;color:#000;transform:scaleX(0.9412);transform-origin:0 0">Security-SPP</div><div class="t" style="right:128.20000000000005px;top:150.32px;font-size:11.5px;color:#000;transform:scaleX(0.9078);transform-origin:100% 0">16384</div><div class="t" style="left:449.79999999999995px;top:150.32px;font-size:11.5px;color:#000;transform:scaleX(1.0174);transform-origin:0 0">None</div><svg class="r" style="left:5px;top:165.20px" width="15" height="15" viewBox="0 0 15 15">
<defs><radialGradient id="gs8" cx="0.35" cy="0.3" r="0.8"><stop offset="0" stop-color="#ffffff"/><stop offset="1" stop-color="#d8d8d8"/></radialGradient></defs>
<circle cx="7.5" cy="7.5" r="6.75" fill="url(#gs8)" stroke="#707070" stroke-width="1.1"/>
<rect x="6.6" y="2.8" width="1.9" height="1.9" fill="#1a3fc0"/><rect x="6.6" y="5.8" width="1.9" height="6.2" fill="#1a3fc0"/>
</svg><div class="t" style="left:21.70000000000001px;top:168.07px;font-size:11.5px;color:#000;transform:scaleX(1.0226);transform-origin:0 0">Information</div><div class="t" style="left:126.79999999999998px;top:168.07px;font-size:11.5px;color:#000;transform:scaleX(0.9256);transform-origin:0 0">12/22/2023 12:45:25 PM</div><div class="t" style="left:273.0px;top:168.07px;font-size:11.5px;color:#000;transform:scaleX(0.9412);transform-origin:0 0">Security-SPP</div><div class="t" style="right:128.20000000000005px;top:168.07px;font-size:11.5px;color:#000;transform:scaleX(0.9078);transform-origin:100% 0">16394</div><div class="t" style="left:449.79999999999995px;top:168.07px;font-size:11.5px;color:#000;transform:scaleX(1.0174);transform-origin:0 0">None</div><svg class="r" style="left:5px;top:182.95px" width="15" height="15" viewBox="0 0 15 15">
<defs><radialGradient id="gs9" cx="0.35" cy="0.3" r="0.8"><stop offset="0" stop-color="#ffffff"/><stop offset="1" stop-color="#d8d8d8"/></radialGradient></defs>
<circle cx="7.5" cy="7.5" r="6.75" fill="url(#gs9)" stroke="#707070" stroke-width="1.1"/>
<rect x="6.6" y="2.8" width="1.9" height="1.9" fill="#1a3fc0"/><rect x="6.6" y="5.8" width="1.9" height="6.2" fill="#1a3fc0"/>
</svg><div class="t" style="left:21.70000000000001px;top:185.82px;font-size:11.5px;color:#000;transform:scaleX(1.0226);transform-origin:0 0">Information</div><div class="t" style="left:126.79999999999998px;top:185.82px;font-size:11.5px;color:#000;transform:scaleX(0.9256);transform-origin:0 0">12/22/2023 12:44:30 PM</div><div class="t" style="left:273.0px;top:185.82px;font-size:11.5px;color:#000;transform:scaleX(0.9412);transform-origin:0 0">VSS</div><div class="t" style="right:128.20000000000005px;top:185.82px;font-size:11.5px;color:#000;transform:scaleX(0.9078);transform-origin:100% 0">8224</div><div class="t" style="left:449.79999999999995px;top:185.82px;font-size:11.5px;color:#000;transform:scaleX(1.0174);transform-origin:0 0">None</div></div><div class="r" style="left:756px;top:97px;width:15px;height:188px;background:#f0f0f0;"></div><div class="r" style="left:756px;top:113.5px;width:15px;height:15.3px;background:#cdcdcd;"></div><svg class="r" style="left:759px;top:102px" width="9" height="6" viewBox="0 0 9 6"><path d="M1 5 L4.5 1.5 L8 5" fill="none" stroke="#606060" stroke-width="1.4"/></svg><svg class="r" style="left:759px;top:275px" width="9" height="6" viewBox="0 0 9 6"><path d="M1 1 L4.5 4.5 L8 1" fill="none" stroke="#606060" stroke-width="1.4"/></svg><svg class="r" style="left:427px;top:244px" width="13" height="19" viewBox="0 0 13 19">
<path d="M0.6 0.6 L0.6 15 L4 11.8 L6.6 17.6 L8.8 16.6 L6.3 11 L11 11 Z" fill="#fff" stroke="#000" stroke-width="1"/>
</svg><div class="r" style="left:186px;top:292px;width:587px;height:2px;background:#8a8a8a;"></div><div class="r" style="left:186px;top:94px;width:3px;height:369px;background:#7a7a7a;"></div><div class="r" style="left:772px;top:290px;width:1px;height:173px;background:#c8c8c8;"></div><div class="t" style="left:195.40px;top:298.04px;font-size:12px;color:#000;transform:scaleX(0.8645);transform-origin:0 0;">Event 16384, Security-SPP</div><svg class="r" style="left:753px;top:298.4px" width="9" height="9" viewBox="0 0 9 9"><path d="M1 1L8 8M8 1L1 8" stroke="#000" stroke-width="2"/></svg><div class="r" style="left:192px;top:314px;width:577px;height:1.5px;background:#a0a0a0;"></div><div class="r" style="left:197px;top:341px;width:566px;height:122px;background:#fff;box-sizing:border-box;border:1px solid #d9d9d9;"></div><div class="r" style="left:200px;top:343px;width:560px;height:120px;background:#f0f0f0;"></div><div class="r" style="left:248px;top:323px;width:41px;height:19px;background:#f0f0f0;box-sizing:border-box;border:1px solid #d9d9d9;border-bottom:none;"></div><div class="r" style="left:197px;top:321px;width:52px;height:22px;background:#fff;box-sizing:border-box;border:1px solid #d9d9d9;border-bottom:none;"></div><div class="t" style="left:204.60px;top:325.04px;font-size:12px;color:#000;transform:scaleX(0.8841);transform-origin:0 0;">General</div><div class="t" style="left:253.00px;top:326.84px;font-size:12px;color:#000;transform:scaleX(0.8824);transform-origin:0 0;">Details</div><div class="r" style="left:211px;top:358px;width:522px;height:105px;background:#f0f0f0;box-sizing:border-box;border-top:2px solid #7a7a7a;border-left:2px solid #7a7a7a;border-right:1px solid #fff;"></div><div class="t" style="left:214.00px;top:361.84px;font-size:12px;color:#000;transform:scaleX(0.8938);transform-origin:0 0;">Successfully scheduled Software Protection service for re-start at 2023-12-23T07:40:48Z. Reason:</div><div class="t" style="left:214.00px;top:374.84px;font-size:12px;color:#000;transform:scaleX(0.8929);transform-origin:0 0;">RulesEngine.</div>
</body></html>
